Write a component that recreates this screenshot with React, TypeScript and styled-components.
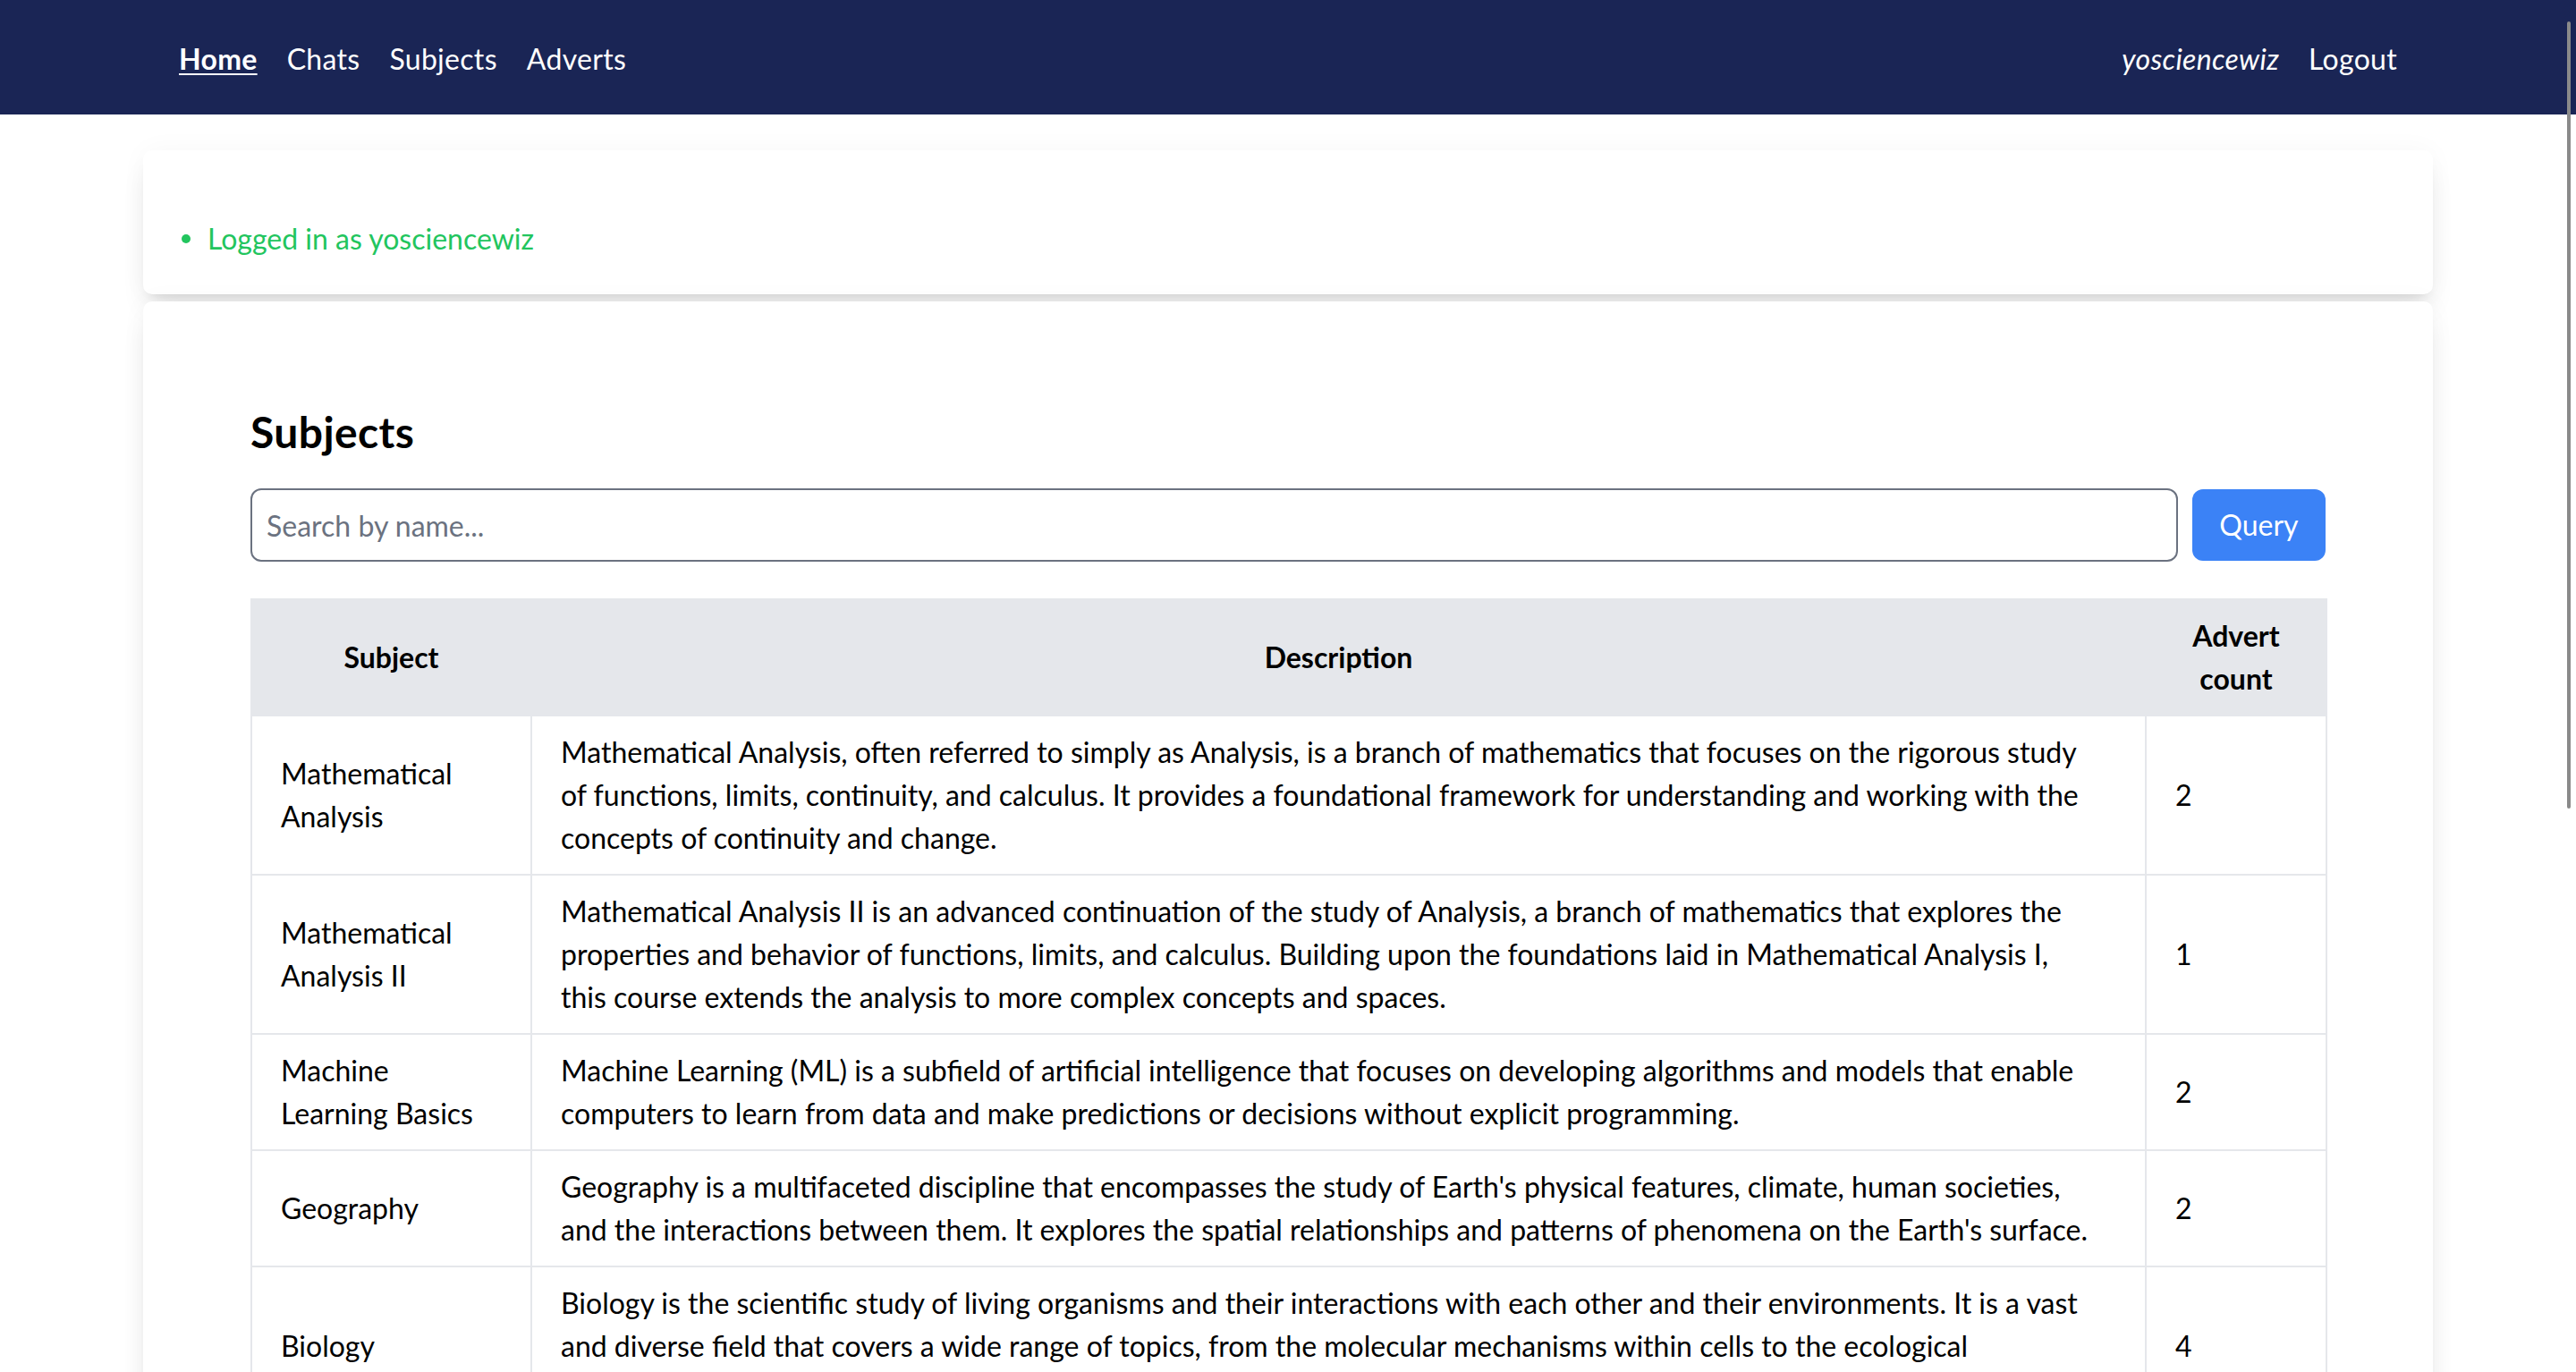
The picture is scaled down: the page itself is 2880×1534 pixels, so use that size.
import React from "react";
import styled, { createGlobalStyle } from "styled-components";

const GlobalStyle = createGlobalStyle`
  html { scrollbar-width: none; }
  html::-webkit-scrollbar, body::-webkit-scrollbar { display: none; width: 0; }
  body {
    margin: 0;
    background: #ffffff;
    color: #000000;
    font-family: Lato, "Liberation Sans", sans-serif;
    font-size: 32px;
    line-height: 48px;
  }
  * { box-sizing: border-box; }
`;

const NavBar = styled.nav`
  height: 128px;
  background: #1a2555;
`;

const NavInner = styled.div`
  max-width: 2560px;
  height: 100%;
  margin: 0 auto;
  padding: 3px 40px 0;
  display: flex;
  align-items: center;
  justify-content: space-between;
`;

const NavGroup = styled.div`
  display: flex;
  align-items: center;
  gap: 33px;
`;

const NavLink = styled.a<{ $active?: boolean; $italic?: boolean }>`
  color: #ffffff;
  text-decoration: ${(p) => (p.$active ? "underline" : "none")};
  text-decoration-thickness: 2px;
  text-underline-offset: 4px;
  font-weight: ${(p) => (p.$active ? 700 : 400)};
  font-style: ${(p) => (p.$italic ? "italic" : "normal")};
  letter-spacing: 0.3px;
  cursor: pointer;
`;

const Main = styled.main`
  max-width: 2560px;
  margin: 40px auto 0;
  display: flex;
  flex-direction: column;
  gap: 8px;
`;

const Card = styled.section`
  background: #ffffff;
  border-radius: 10px;
  box-shadow: 0 20px 30px -6px rgba(0, 0, 0, 0.1), 0 8px 12px -8px rgba(0, 0, 0, 0.1),
    0 0 30px rgba(0, 0, 0, 0.035);
`;

const FlashCard = styled(Card)`
  padding: 75px 43px 38px;
`;

const FlashItem = styled.div`
  display: flex;
  align-items: center;
  gap: 19px;
  color: #22c55e;
`;

const Dot = styled.span`
  width: 10px;
  height: 10px;
  border-radius: 50%;
  background: #22c55e;
`;

const ContentCard = styled(Card)`
  padding: 114px 120px 80px;
`;

const Title = styled.h1`
  margin: 0 0 31px;
  font-size: 48px;
  line-height: 64px;
  font-weight: 700;
  letter-spacing: 0.4px;
`;

const SearchForm = styled.form`
  display: flex;
  align-items: center;
  gap: 16px;
  margin-bottom: 41px;
`;

const SearchInput = styled.input`
  flex: 1;
  height: 82px;
  padding: 0 16px;
  border: 2px solid #6b7280;
  border-radius: 12px;
  font-family: inherit;
  font-size: 32px;
  color: #111827;
  outline: none;
  &::placeholder {
    color: #6b7280;
  }
`;

const QueryButton = styled.button`
  height: 80px;
  width: 149px;
  padding: 0;
  border: none;
  border-radius: 12px;
  background: #3b82f6;
  color: #ffffff;
  font-family: inherit;
  font-size: 32px;
  line-height: 48px;
  cursor: pointer;
`;

const Table = styled.table`
  width: 100%;
  table-layout: fixed;
  border-collapse: collapse;
`;

const HeadCell = styled.th`
  background: #e5e7eb;
  padding: 16px 32px;
  font-weight: 700;
  text-align: center;
  vertical-align: middle;
  border: 2px solid #e5e7eb;
`;

const Cell = styled.td`
  padding: 16px 32px;
  text-align: left;
  vertical-align: middle;
  border: 2px solid #e5e7eb;
`;

const ScrollThumb = styled.div`
  position: fixed;
  top: 24px;
  right: 6px;
  width: 4px;
  height: 880px;
  border-radius: 2px;
  background: #8a8a8a;
`;

type Subject = { name: string; lines: string[]; count: number };

const subjects: Subject[] = [
  {
    name: "Mathematical Analysis",
    lines: [
      "Mathematical Analysis, often referred to simply as Analysis, is a branch of mathematics that focuses on the rigorous study",
      "of functions, limits, continuity, and calculus. It provides a foundational framework for understanding and working with the",
      "concepts of continuity and change.",
    ],
    count: 2,
  },
  {
    name: "Mathematical Analysis II",
    lines: [
      "Mathematical Analysis II is an advanced continuation of the study of Analysis, a branch of mathematics that explores the",
      "properties and behavior of functions, limits, and calculus. Building upon the foundations laid in Mathematical Analysis I,",
      "this course extends the analysis to more complex concepts and spaces.",
    ],
    count: 1,
  },
  {
    name: "Machine Learning Basics",
    lines: [
      "Machine Learning (ML) is a subfield of artificial intelligence that focuses on developing algorithms and models that enable",
      "computers to learn from data and make predictions or decisions without explicit programming.",
    ],
    count: 2,
  },
  {
    name: "Geography",
    lines: [
      "Geography is a multifaceted discipline that encompasses the study of Earth's physical features, climate, human societies,",
      "and the interactions between them. It explores the spatial relationships and patterns of phenomena on the Earth's surface.",
    ],
    count: 2,
  },
  {
    name: "Biology",
    lines: [
      "Biology is the scientific study of living organisms and their interactions with each other and their environments. It is a vast",
      "and diverse field that covers a wide range of topics, from the molecular mechanisms within cells to the ecological",
      "dynamics of entire ecosystems.",
    ],
    count: 4,
  },
];

export default function App() {
  return (
    <>
      <GlobalStyle />
      <NavBar>
        <NavInner>
          <NavGroup>
            <NavLink $active>Home</NavLink>
            <NavLink>Chats</NavLink>
            <NavLink>Subjects</NavLink>
            <NavLink>Adverts</NavLink>
          </NavGroup>
          <NavGroup>
            <NavLink $italic>yosciencewiz</NavLink>
            <NavLink>Logout</NavLink>
          </NavGroup>
        </NavInner>
      </NavBar>
      <Main>
        <FlashCard>
          <FlashItem>
            <Dot />
            Logged in as yosciencewiz
          </FlashItem>
        </FlashCard>
        <ContentCard>
          <Title>Subjects</Title>
          <SearchForm onSubmit={(e) => e.preventDefault()}>
            <SearchInput placeholder="Search by name..." />
            <QueryButton type="submit">Query</QueryButton>
          </SearchForm>
          <Table>
            <colgroup>
              <col style={{ width: 313 }} />
              <col style={{ width: 1805 }} />
              <col style={{ width: 202 }} />
            </colgroup>
            <thead>
              <tr>
                <HeadCell>Subject</HeadCell>
                <HeadCell>Description</HeadCell>
                <HeadCell>Advert count</HeadCell>
              </tr>
            </thead>
            <tbody>
              {subjects.map((s) => (
                <tr key={s.name}>
                  <Cell>{s.name}</Cell>
                  <Cell>
                    {s.lines.map((l, i) => (
                      <React.Fragment key={i}>
                        {i > 0 && <br />}
                        {l}
                      </React.Fragment>
                    ))}
                  </Cell>
                  <Cell>{s.count}</Cell>
                </tr>
              ))}
            </tbody>
          </Table>
        </ContentCard>
      </Main>
      <ScrollThumb />
    </>
  );
}
